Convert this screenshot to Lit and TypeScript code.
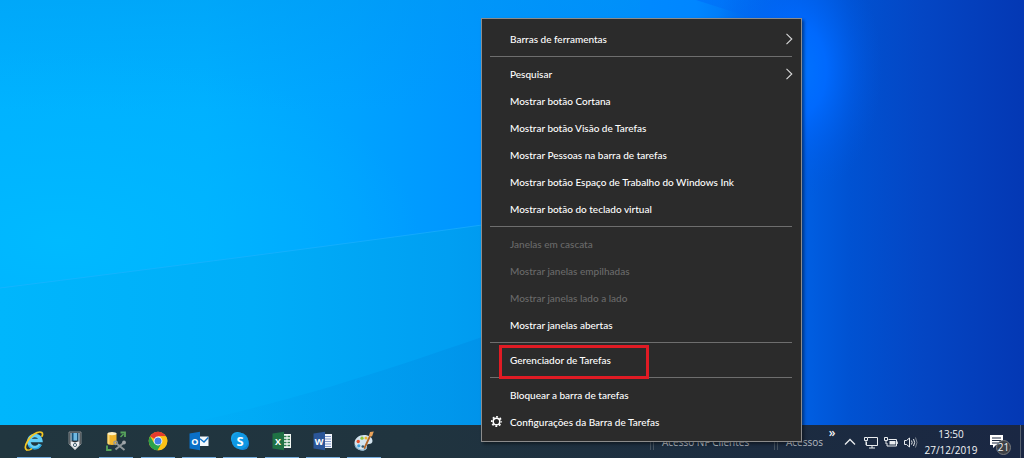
import { LitElement, html, css, svg, nothing } from "lit";
import { customElement, property } from "lit/decorators.js";
import { classMap } from "lit/directives/class-map.js";

interface MenuEntry {
  label: string;
  submenu?: boolean;
  disabled?: boolean;
  marked?: boolean;
  gear?: boolean;
}

const MENU_GROUPS: MenuEntry[][] = [
  [{ label: "Barras de ferramentas", submenu: true }],
  [
    { label: "Pesquisar", submenu: true },
    { label: "Mostrar botão Cortana" },
    { label: "Mostrar botão Visão de Tarefas" },
    { label: "Mostrar Pessoas na barra de tarefas" },
    { label: "Mostrar botão Espaço de Trabalho do Windows Ink" },
    { label: "Mostrar botão do teclado virtual" },
  ],
  [
    { label: "Janelas em cascata", disabled: true },
    { label: "Mostrar janelas empilhadas", disabled: true },
    { label: "Mostrar janelas lado a lado", disabled: true },
    { label: "Mostrar janelas abertas" },
  ],
  [{ label: "Gerenciador de Tarefas", marked: true }],
  [
    { label: "Bloquear a barra de tarefas" },
    { label: "Configurações da Barra de Tarefas", gear: true },
  ],
];

const explorerIcon = svg`
  <path d="M16.200 13.200a6 6 0 1 1 .600-3.600H6" fill="none" stroke="#62cff8" stroke-width="3.500"/>
  <path d="M17 13.800a7 7 0 0 1-12.400.600" fill="none" stroke="#2ba6e0" stroke-width="1.500"/>
  <path d="M2.600 18.800C-1.400 16 5.600 4.400 13 1.600C17.400 0 19.600 1.800 18 5.200" fill="none" stroke="#f6c722" stroke-width="1.700" stroke-linecap="round"/>
  <path d="M2.600 18.800c1.400.600 3.400.100 5-1" fill="none" stroke="#f6c722" stroke-width="1.400" stroke-linecap="round"/>`;

const medalIcon = svg`
  <path d="M4 1h12v12l-3 3-3 3-3-3-3-3z" fill="#2c3236" stroke="#858b8f" stroke-width="1"/>
  <path d="M5.500 2h9v7.500h-9z" fill="#17547c"/>
  <path d="M8.500 2h3.500v7.500H8.500z" fill="#6fb9e2"/>
  <path d="M5.500 2h1v8h-1zM13.500 2h1v8h-1z" fill="#d5dde2"/>
  <path d="M5.500 10l4.500 1.500 4.500-1.500v4l-4.500 4.500L5.500 14z" fill="#edf0f2"/>
  <circle cx="10" cy="14" r="1.600" fill="none" stroke="#4a6675" stroke-width="1"/>`;

const databaseIcon = svg`
  <path d="M1.500 2.500v9.500c0 1.100 2 1.900 4.500 1.900s4.500-.800 4.500-1.900V2.500z" fill="#f1b52c"/>
  <path d="M1.500 3v9.300c0 .7.800 1.200 2 1.400V4z" fill="#fbd877"/>
  <ellipse cx="6" cy="2.600" rx="4.500" ry="1.700" fill="#fff1c4"/>
  <path d="M14.500 1.500h4.500v4.500M1 14.500v4.500h4.500" fill="none" stroke="#58a55c" stroke-width="1.800"/>
  <path d="M14.500 6l3-3" stroke="#58a55c" stroke-width="1.400"/>
  <path d="M9.500 18.500l8-6.500M10.500 12.500l8 6.500" stroke="#8e9699" stroke-width="2"/>
  <circle cx="9.600" cy="11.800" r="1.700" fill="none" stroke="#8e9699" stroke-width="1.400"/>
  <circle cx="18" cy="11.500" r="1.900" fill="#a0a7aa"/>`;

const chromeIcon = svg`
  <circle cx="10" cy="10" r="9.300" fill="#fbc116"/>
  <path d="M10 10L2 5.300A9.300 9.300 0 0 1 18 5.300L10 5.600z" fill="#e33b2e"/>
  <path d="M2 5.300A9.300 9.300 0 0 0 9.600 19.300L13.800 12.200 10 10 6.200 12.200z" fill="#2aa24c"/>
  <path d="M18 5.300H10L13.900 12.200 9.600 19.300A9.300 9.300 0 0 0 18 5.300z" fill="#fbc116"/>
  <circle cx="10" cy="10" r="4.400" fill="#fff"/>
  <circle cx="10" cy="10" r="3.500" fill="#3f7fe8"/>`;

const outlookIcon = svg`
  <path d="M10 5.500h9.500v9.500H10z" fill="#f2f7fb"/>
  <path d="M11 7.800l4 3.200 4.300-4.500" fill="none" stroke="#0a70c8" stroke-width="1.400"/>
  <path d="M.500 2.500L11 .800v18.400L.500 17.500z" fill="#0a70c8"/>
  <text class="glyph" x="5.800" y="13.500">O</text>`;

const skypeIcon = svg`
  <rect x="1" y="1" width="13" height="13" rx="6" fill="#17a3e8"/>
  <rect x="6" y="6" width="13" height="13" rx="6" fill="#1183d4"/>
  <circle cx="10" cy="10" r="8.300" fill="#1098e4"/>
  <text class="glyph big" x="10" y="14.500">S</text>`;

const excelIcon = svg`
  <path d="M10 3h9v14h-9z" fill="#f3f8f4"/>
  <path d="M12 5.500h6M12 8.500h6M12 11.500h6M12 14.500h6" stroke="#2f7f4f" stroke-width="1.600"/>
  <path d="M15 4v12" stroke="#f3f8f4" stroke-width="1"/>
  <path d="M.500 2.500L12 .800v18.400L.500 17.500z" fill="#1f7244"/>
  <text class="glyph" x="6" y="13.500">X</text>`;

const wordIcon = svg`
  <path d="M10 3h9v14h-9z" fill="#f2f5fb"/>
  <path d="M12 5.500h6M12 8h6M12 10.500h6M12 13h6M12 15.500h6" stroke="#7f98cc" stroke-width="1"/>
  <path d="M.500 2.500L12 .800v18.400L.500 17.500z" fill="#2b5699"/>
  <text class="glyph" x="6" y="13.500">W</text>`;

const paintIcon = svg`
  <path d="M.500 12C.500 7.500 5 4 10 4s8.500 2.500 8.500 6c0 2-1.500 3-3.500 3s-2.500 1-2 2.500S11.500 19.500 8.500 19.500C4 19.500.500 16 .500 12z" fill="#d4e4ee"/>
  <path d="M1 14c1 3.500 5 5.800 9 4.800 2-.500 2.600-1.500 2.500-3" fill="none" stroke="#8fb4cc" stroke-width="1.200"/>
  <circle cx="4.200" cy="10.500" r="1.700" fill="#e2512e"/>
  <circle cx="8" cy="7.200" r="1.600" fill="#8cc63f"/>
  <circle cx="4.800" cy="14.800" r="1.600" fill="#3aa3e0"/>
  <circle cx="12" cy="7" r="1.500" fill="#efb52a"/>
  <circle cx="8.800" cy="15.500" r="1.300" fill="#30566c"/>
  <path d="M10.500 17L16.500 4" stroke="#b3682a" stroke-width="1.800" stroke-linecap="round"/>
  <path d="M15 5L16 1 19.800 .500 18 5.600z" fill="#e9a35a"/>`;

const APPS = [
  { name: "Internet Explorer", icon: explorerIcon, open: true },
  { name: "Medalha", icon: medalIcon, open: false },
  { name: "Banco de dados", icon: databaseIcon, open: true },
  { name: "Google Chrome", icon: chromeIcon, open: true },
  { name: "Outlook", icon: outlookIcon, open: true },
  { name: "Skype", icon: skypeIcon, open: true },
  { name: "Excel", icon: excelIcon, open: true },
  { name: "Word", icon: wordIcon, open: true },
  { name: "Paint", icon: paintIcon, open: true },
];

const TRAY = [
  {
    name: "Mostrar ícones ocultos",
    icon: svg`<path d="M3 10.500L8 5.500l5 5" stroke-width="1.300"/>`,
  },
  {
    name: "Rede",
    icon: svg`
      <path d="M6 3.500h9.500v8h-11V8M10 11.500v2.500M7 14h6"/>
      <path d="M2.500 3.500h3v3h-3zM4 6.500V11"/>`,
  },
  {
    name: "Bateria",
    icon: svg`
      <path d="M6.500 5.500h8v6.500H5V9"/>
      <path d="M7.500 7h6v3.500h-6z" fill="#e9ecef" stroke="none"/>
      <path d="M2.500 3.500h3v3h-3zM4 6.500V10M15.700 7.500v2.500"/>`,
  },
  {
    name: "Volume",
    icon: svg`
      <path d="M2.500 6.500h2l3-2.500v9l-3-2.500h-2z"/>
      <path d="M9.500 6.500q1.300 2 0 4M11.500 5q2.300 3.500 0 7"/>
      <path d="M13.500 3.500q3 5 0 10" stroke="#7e8794"/>`,
  },
];

@customElement("desktop-wallpaper")
class DesktopWallpaper extends LitElement {
  static styles = css`
    :host {
      display: block;
      min-height: 0;
    }
    .scene {
      display: block;
      width: 100%;
      height: 100%;
    }
  `;

  render() {
    return html`
      <svg class="scene" viewBox="0 0 1024 425" preserveAspectRatio="none" aria-hidden="true">
        <defs>
          <linearGradient id="sky" x1="0" x2="1" y1="0" y2="0">
            <stop offset="0" stop-color="#00b2ff" />
            <stop offset=".2" stop-color="#00b0ff" />
            <stop offset=".33" stop-color="#00a4ff" />
            <stop offset=".47" stop-color="#0094ff" />
            <stop offset=".68" stop-color="#0086ff" />
            <stop offset=".76" stop-color="#0066ec" />
            <stop offset=".83" stop-color="#0052d2" />
            <stop offset=".9" stop-color="#0446c4" />
            <stop offset="1" stop-color="#0438b4" />
          </linearGradient>
          <linearGradient id="floor" x1="0" x2="1" y1="0" y2="0">
            <stop offset="0" stop-color="#00b6fc" />
            <stop offset=".45" stop-color="#00aef8" />
            <stop offset=".8" stop-color="#009ff2" />
            <stop offset="1" stop-color="#0092ec" />
          </linearGradient>
          <linearGradient id="shade" x1="0" x2="1" y1="0" y2="0">
            <stop offset="0" stop-color="#0088e0" stop-opacity="0" />
            <stop offset="1" stop-color="#0084e0" stop-opacity=".45" />
          </linearGradient>
          <radialGradient id="glow">
            <stop offset="0" stop-color="#0074ff" />
            <stop offset=".35" stop-color="#006aff" stop-opacity=".95" />
            <stop offset=".7" stop-color="#0060f0" stop-opacity=".4" />
            <stop offset="1" stop-color="#0058e0" stop-opacity="0" />
          </radialGradient>
          <radialGradient id="bright">
            <stop offset="0" stop-color="#00baff" />
            <stop offset="1" stop-color="#00b4ff" stop-opacity="0" />
          </radialGradient>
          <linearGradient id="top" x1="0" x2="0" y1="0" y2="1">
            <stop offset="0" stop-color="#0098f0" stop-opacity=".4" />
            <stop offset="1" stop-color="#0098f4" stop-opacity="0" />
          </linearGradient>
          <linearGradient id="ray" x1="0" x2="1" y1="0" y2="0">
            <stop offset="0" stop-color="#006cf8" stop-opacity=".6" />
            <stop offset="1" stop-color="#0064f0" stop-opacity="0" />
          </linearGradient>
        </defs>
        <rect width="1024" height="425" fill="url(#sky)" />
        <rect width="640" height="110" fill="url(#top)" />
        <ellipse cx="60" cy="240" rx="360" ry="190" fill="url(#bright)" />
        <path d="M0 288C160 268 330 246 482 225L560 214V425H0z" fill="url(#floor)" />
        <path d="M0 288C160 268 330 246 482 225" fill="none" stroke="#26b4ff" stroke-opacity=".5" />
        <path d="M180 425C300 400 400 365 482 337L560 310V425z" fill="url(#shade)" />
        <ellipse cx="796" cy="70" rx="86" ry="130" fill="url(#glow)" />
        <path d="M696 0L765 22H800V0z" fill="url(#ray)" />
      </svg>
    `;
  }
}

@customElement("taskbar-menu")
class TaskbarMenu extends LitElement {
  static styles = css`
    :host {
      display: block;
      box-sizing: border-box;
      padding: 6px 0;
      border: 1px solid #8c8c8c;
      background: #2b2b2b;
      box-shadow: 2px 2px 3px rgba(0, 0, 0, 0.45);
    }
    .item {
      position: relative;
      display: grid;
      grid-template-columns: 20px 1fr 8px;
      align-items: center;
      width: 100%;
      height: 27px;
      padding: 0 8px;
      border: 0;
      background: none;
      color: #fff;
      font: 500 10px/16px Lato, "Open Sans", sans-serif;
      text-align: left;
    }
    .item:disabled {
      color: #6a6a6a;
    }
    .item:not(:disabled):hover {
      background: #414141;
    }
    .marked::after {
      content: "";
      position: absolute;
      left: 17px;
      top: -1px;
      width: 150px;
      height: 34px;
      box-sizing: border-box;
      border: 3px solid #e01b24;
      z-index: 1;
    }
    .label {
      grid-column: 2;
    }
    .gear {
      grid-column: 1;
      width: 13px;
      height: 13px;
    }
    .arrow {
      grid-column: 3;
      width: 8px;
      height: 12px;
    }
    .rule {
      height: 1px;
      margin: 4px 9px 3px 8px;
      border: 0;
      background: #6e6e6e;
    }
  `;

  private item(entry: MenuEntry) {
    return html`
      <button
        type="button"
        role="menuitem"
        class=${classMap({ item: true, marked: !!entry.marked })}
        ?disabled=${entry.disabled}
        aria-haspopup=${entry.submenu ? "menu" : nothing}
      >
        ${entry.gear
          ? html`<svg class="gear" viewBox="0 0 13 13" aria-hidden="true">
              <circle cx="6.500" cy="6.500" r="3.300" fill="none" stroke="#fff" stroke-width="1.500" />
              <circle cx="6.500" cy="6.500" r="4.700" fill="none" stroke="#fff" stroke-width="1.700"
                stroke-dasharray="1.846 1.846" stroke-dashoffset=".92" />
            </svg>`
          : nothing}
        <span class="label">${entry.label}</span>
        ${entry.submenu
          ? html`<svg class="arrow" viewBox="0 0 8 12" aria-hidden="true">
              <path d="M1.500 .8L6.800 6 1.500 11.200" fill="none" stroke="#d8d8d8" stroke-width="1.100" />
            </svg>`
          : nothing}
      </button>
    `;
  }

  render() {
    return MENU_GROUPS.map(
      (group, i) => html`${i ? html`<hr class="rule" />` : nothing}${group.map((e) => this.item(e))}`,
    );
  }
}

@customElement("task-bar")
class TaskBar extends LitElement {
  @property() time = "13:50";
  @property() date = "27/12/2019";
  @property({ type: Number }) notices = 21;

  static styles = css`
    :host {
      display: flex;
      height: 33px;
      background: linear-gradient(90deg, #21363f, #20343f 40%, #1c2c40 75%, #1a2743);
      color: #f2f4f6;
      font: 400 11px/16px "Open Sans", "Noto Sans", sans-serif;
    }
    button {
      display: flex;
      align-items: center;
      justify-content: center;
      padding: 0;
      border: 0;
      background: none;
      color: inherit;
      font: inherit;
    }
    .apps {
      display: grid;
      grid-template-columns: repeat(9, 1fr);
      width: 372px;
      padding-left: 13px;
    }
    .app {
      justify-self: center;
      width: 34px;
      border-bottom: 1px solid transparent;
    }
    .open {
      border-bottom-color: #76aee0;
    }
    .app-icon {
      width: 20px;
      height: 20px;
    }
    .glyph {
      fill: #fff;
      font: 700 9px "Open Sans", sans-serif;
      text-anchor: middle;
    }
    .big {
      font-size: 13px;
    }
    .bands {
      display: flex;
      margin-left: auto;
    }
    .band {
      display: flex;
      align-items: center;
      gap: 8px;
      width: 50px;
      color: #b4bac0;
      font-size: 10px;
      white-space: nowrap;
    }
    .wide {
      width: 124px;
    }
    .grip {
      box-sizing: border-box;
      width: 4px;
      height: 16px;
      flex: none;
      border: solid #46535f;
      border-width: 0 1px;
    }
    .more {
      align-items: flex-start;
      width: 16px;
      font-size: 12px;
      font-weight: 600;
    }
    .tray {
      display: flex;
    }
    .tray-button {
      width: 20px;
    }
    .tray-icon {
      width: 16px;
      height: 16px;
      fill: none;
      stroke: #e9ecef;
    }
    .clock {
      flex-direction: column;
      width: 62px;
      font-size: 10px;
    }
    .notices {
      position: relative;
      align-items: flex-start;
      justify-content: flex-start;
      width: 38px;
      padding: 9px 0 0 7px;
    }
    .note-icon {
      width: 16px;
      height: 16px;
    }
    .count {
      position: absolute;
      left: 14px;
      top: 15px;
      width: 15px;
      height: 15px;
      border: 1px solid #77797c;
      border-radius: 50%;
      box-sizing: border-box;
      background: #3d4045;
      font-size: 10px;
      line-height: 13px;
      text-align: center;
    }
    .peek {
      width: 4px;
      border-left: 1px solid #56606f;
      box-sizing: border-box;
    }
  `;

  render() {
    return html`
      <nav class="apps" aria-label="Aplicativos">
        ${APPS.map(
          (app) => html`
            <button type="button" class=${classMap({ app: true, open: app.open })} aria-label=${app.name}>
              <svg class="app-icon" viewBox="0 0 20 20" aria-hidden="true">${app.icon}</svg>
            </button>
          `,
        )}
      </nav>
      <div class="bands">
        <div class="band wide"><span class="grip"></span><span>Acesso NF Clientes</span></div>
        <div class="band"><span class="grip"></span><span>Acessos</span></div>
        <button type="button" class="more">»</button>
      </div>
      <div class="tray">
        ${TRAY.map(
          (t) => html`
            <button type="button" class="tray-button" aria-label=${t.name}>
              <svg class="tray-icon" viewBox="0 0 16 16" aria-hidden="true">${t.icon}</svg>
            </button>
          `,
        )}
      </div>
      <button type="button" class="clock"><span>${this.time}</span><span>${this.date}</span></button>
      <button type="button" class="notices">
        <svg class="note-icon" viewBox="0 0 16 16" aria-hidden="true">
          <path d="M1 1h13v10H7l-3 3v-3H1z" fill="#fff" />
          <path d="M3 4h9M3 6.500h9M3 9h6" stroke="#1c2940" />
        </svg>
        <span class="count">${this.notices}</span>
      </button>
      <button type="button" class="peek" aria-label="Mostrar área de trabalho"></button>
    `;
  }
}

@customElement("app-root")
class AppRoot extends LitElement {
  static styles = css`
    :host {
      position: relative;
      display: flex;
      flex-direction: column;
      height: 100vh;
      overflow: hidden;
    }
    .wallpaper {
      flex: 1;
    }
    .menu {
      position: absolute;
      left: 481px;
      bottom: 16px;
      width: 321px;
    }
  `;

  render() {
    return html`
      <desktop-wallpaper class="wallpaper"></desktop-wallpaper>
      <task-bar></task-bar>
      <taskbar-menu class="menu" role="menu"></taskbar-menu>
    `;
  }
}
